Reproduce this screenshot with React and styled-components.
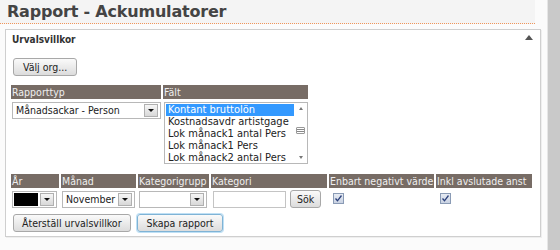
import styled, { createGlobalStyle } from "styled-components";

const UI_FONT = `"DejaVu Sans Condensed", "DejaVu Sans", Verdana, sans-serif`;

const GlobalStyle = createGlobalStyle`
  html, body {
    margin: 0;
    padding: 0;
    background: #fbfbfb;
  }
  body {
    font-family: ${UI_FONT};
    font-size: 10px;
    color: #222;
  }
`;

const Page = styled.div`
  display: flex;
  width: 560px;
  height: 250px;
  overflow: hidden;
`;

const Main = styled.div`
  width: 548px;
  display: flex;
  flex-direction: column;
`;

const SideStrip = styled.div`
  width: 12px;
  background: #c9c9c9;
  border-left: 1px solid #e6e6e6;
`;

const TitleBar = styled.div`
  height: 24px;
  background: #f4f4f4;
  padding-left: 7px;
  margin-right: 12px;
  border-bottom: 1px dotted #f0955a;
  box-sizing: border-box;
  display: flex;
  align-items: center;
`;

const Title = styled.h1`
  margin: 0;
  font-family: "DejaVu Sans", Verdana, sans-serif;
  font-size: 16px;
  font-weight: bold;
  color: #444;
  letter-spacing: -0.2px;
`;

const Panel = styled.div`
  margin: 5px 0 0 5px;
  width: 536px;
  height: 208px;
  box-sizing: border-box;
  background: #fff;
  border: 1px solid #cfcfcf;
  box-shadow: 1px 1px 0 #eee;
  padding: 3px 5px 0 5px;
  display: flex;
  flex-direction: column;
`;

const PanelHead = styled.div`
  display: flex;
  justify-content: space-between;
  align-items: flex-start;
  padding-left: 1px;
`;

const PanelTitle = styled.div`
  font-weight: bold;
  font-size: 10px;
  color: #333;
  line-height: 13px;
`;

const Collapse = styled.div`
  width: 0;
  height: 0;
  border-left: 4px solid transparent;
  border-right: 4px solid transparent;
  border-bottom: 5px solid #555;
  margin: 2px 2px 0 0;
`;

const Button = styled.button`
  font-family: ${UI_FONT};
  font-size: 10.5px;
  color: #222;
  height: 18px;
  padding: 0 ${(p) => p.$pad ?? 8}px;
  border: 1px solid ${(p) => (p.$focus ? "#7fb3d5" : "#a8a8a8")};
  box-shadow: ${(p) => (p.$focus ? "0 0 0 1px #bfe0f5" : "none")};
  border-radius: 3px;
  background: linear-gradient(#fafafa, #dcdcdc);
  line-height: 16px;
  white-space: nowrap;
`;

const OrgRow = styled.div`
  margin-top: 12px;
  padding-left: 2px;
`;

const FieldGrid = styled.div`
  display: grid;
  grid-template-columns: ${(p) => p.$cols};
  column-gap: 2px;
  row-gap: 3px;
  margin-top: ${(p) => p.$top}px;
  align-items: start;
`;

const HeadCell = styled.div`
  background: #776c65;
  color: #efefef;
  height: 14px;
  line-height: 14px;
  padding-left: 1px;
  font-size: 10.5px;
  white-space: nowrap;
  overflow: hidden;
`;

const SelectBox = styled.div`
  display: flex;
  align-items: center;
  width: ${(p) => p.$w}px;
  height: 17px;
  box-sizing: border-box;
  border: 1px solid #b8b8b8;
  background: #fff;
  margin-left: 1px;
`;

const SelectValue = styled.div`
  flex: 1;
  padding-left: 3px;
  font-size: 10.5px;
  line-height: 15px;
  white-space: nowrap;
  overflow: hidden;
  align-self: stretch;
  background: ${(p) => (p.$dark ? "#000" : "transparent")};
  margin: ${(p) => (p.$dark ? "1px 2px 1px 1px" : "0")};
`;

const DropButton = styled.div`
  width: 12px;
  height: 11px;
  margin-right: 2px;
  border: 1px solid #b0b0b0;
  background: linear-gradient(#f6f6f6, #d8d8d8);
  display: flex;
  align-items: center;
  justify-content: center;
  &::after {
    content: "";
    border-left: 3px solid transparent;
    border-right: 3px solid transparent;
    border-top: 3px solid #111;
  }
`;

const ListBox = styled.div`
  display: flex;
  width: 144px;
  height: 62px;
  box-sizing: border-box;
  border: 1px solid #b8b8b8;
  background: #fff;
  margin-left: 1px;
`;

const ListItems = styled.div`
  flex: 1;
  padding: 1px 0 0 1px;
  overflow: hidden;
`;

const ListItem = styled.div`
  height: 12px;
  line-height: 12px;
  padding-left: 2px;
  font-size: 11px;
  white-space: nowrap;
  background: ${(p) => (p.$selected ? "#3399ff" : "transparent")};
  color: ${(p) => (p.$selected ? "#fff" : "#222")};
`;

const ScrollTrack = styled.div`
  width: 13px;
  display: flex;
  flex-direction: column;
  align-items: center;
  justify-content: space-between;
  padding: 4px 0;
  box-sizing: border-box;
`;

const Arrow = styled.div`
  width: 0;
  height: 0;
  border-left: 2px solid transparent;
  border-right: 2px solid transparent;
  border-${(p) => (p.$up ? "bottom" : "top")}: 3px solid #777;
`;

const Thumb = styled.div`
  width: 9px;
  height: 7px;
  border: 1px solid #999;
  border-radius: 1px;
  background: repeating-linear-gradient(#fff 0 1px, #888 1px 2px);
  box-sizing: border-box;
  margin-top: -6px;
`;

const InputRow = styled.div`
  display: flex;
  align-items: center;
  gap: 4px;
  margin-top: -1px;
`;

const TextInput = styled.div`
  width: 73px;
  height: 17px;
  box-sizing: border-box;
  border: 1px solid #c4c4c4;
  background: #fff;
  margin-left: 2px;
`;

const CheckBox = styled.div`
  width: 11px;
  height: 11px;
  margin: 2px 0 0 4px;
  box-sizing: border-box;
  border: 1px solid #8a9bb5;
  background: linear-gradient(#e6ebf3, #c9d2e2);
  display: flex;
  align-items: center;
  justify-content: center;
`;

const ActionRow = styled.div`
  display: flex;
  gap: 6px;
  margin-top: 6px;
  padding-left: 2px;
`;

const Select = ({ w, value, dark }) => (
  <SelectBox $w={w}>
    <SelectValue $dark={dark}>{value}</SelectValue>
    <DropButton />
  </SelectBox>
);

const Check = () => (
  <CheckBox>
    <svg width="7" height="7" viewBox="0 0 7 7">
      <path d="M0.5 3.5 L2.5 5.8 L6.5 0.5" fill="none" stroke="#2a3f7a" strokeWidth="1.3" />
    </svg>
  </CheckBox>
);

const fields = [
  "Kontant bruttolön",
  "Kostnadsavdr artistgage",
  "Lok månack1 antal Pers",
  "Lok månack1 Pers",
  "Lok månack2 antal Pers",
];

const App = () => {
  return (
    <Page>
      <GlobalStyle />
      <Main>
        <TitleBar>
          <Title>Rapport - Ackumulatorer</Title>
        </TitleBar>
        <Panel>
          <PanelHead>
            <PanelTitle>Urvalsvillkor</PanelTitle>
            <Collapse />
          </PanelHead>
          <OrgRow>
            <Button $pad={9}>Välj org...</Button>
          </OrgRow>

          <FieldGrid $cols="150px 145px" $top={9}>
            <HeadCell>Rapporttyp</HeadCell>
            <HeadCell>Fält</HeadCell>
            <Select w={149} value="Månadsackar - Person" />
            <ListBox>
              <ListItems>
                {fields.map((f, i) => (
                  <ListItem key={f} $selected={i === 0}>
                    {f}
                  </ListItem>
                ))}
              </ListItems>
              <ScrollTrack>
                <Arrow $up />
                <Thumb />
                <Arrow />
              </ScrollTrack>
            </ListBox>
          </FieldGrid>

          <FieldGrid $cols="48px 75px 71px 116px 105px 96px" $top={10}>
            <HeadCell>År</HeadCell>
            <HeadCell>Månad</HeadCell>
            <HeadCell>Kategorigrupp</HeadCell>
            <HeadCell>Kategori</HeadCell>
            <HeadCell>Enbart negativt värde</HeadCell>
            <HeadCell>Inkl avslutade anst</HeadCell>
            <Select w={45} dark />
            <Select w={73} value="November" />
            <Select w={68} />
            <InputRow>
              <TextInput />
              <Button $pad={6}>Sök</Button>
            </InputRow>
            <Check />
            <Check />
          </FieldGrid>

          <ActionRow>
            <Button>Återställ urvalsvillkor</Button>
            <Button $focus $pad={9}>Skapa rapport</Button>
          </ActionRow>
        </Panel>
      </Main>
      <SideStrip />
    </Page>
  );
};

export default App;
